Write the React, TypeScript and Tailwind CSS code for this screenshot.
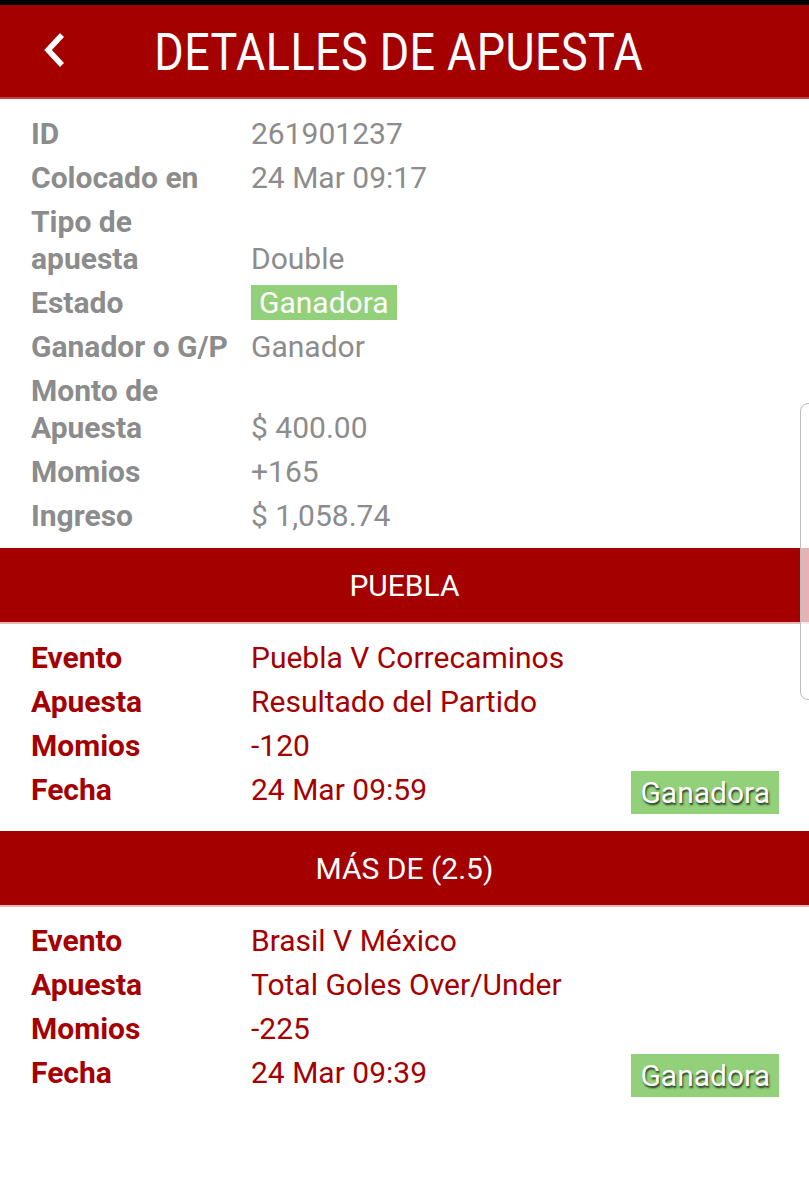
import React from "react";

const summary: { label: string; value: string; badge?: boolean }[] = [
  { label: "ID", value: "261901237" },
  { label: "Colocado en", value: "24 Mar 09:17" },
  { label: "Tipo de apuesta", value: "Double" },
  { label: "Estado", value: "Ganadora", badge: true },
  { label: "Ganador o G/P", value: "Ganador" },
  { label: "Monto de Apuesta", value: "$ 400.00" },
  { label: "Momios", value: "+165" },
  { label: "Ingreso", value: "$ 1,058.74" },
];

const selections = [
  {
    title: "PUEBLA",
    rows: [
      { label: "Evento", value: "Puebla V Correcaminos" },
      { label: "Apuesta", value: "Resultado del Partido" },
      { label: "Momios", value: "-120" },
      { label: "Fecha", value: "24 Mar 09:59" },
    ],
  },
  {
    title: "MÁS DE (2.5)",
    rows: [
      { label: "Evento", value: "Brasil V México" },
      { label: "Apuesta", value: "Total Goles Over/Under" },
      { label: "Momios", value: "-225" },
      { label: "Fecha", value: "24 Mar 09:39" },
    ],
  },
];

function SectionBand({ title }: { title: string }) {
  return (
    <div className="border-b-2 border-[#e8b4b4]">
      <div className="flex h-[74px] items-center justify-center bg-[#a50000] text-[30px] text-white">
        {title}
      </div>
    </div>
  );
}

export default function App() {
  return (
    <div className="relative min-h-[1200px] bg-white font-['Roboto',sans-serif]">
      <div className="h-[5px] bg-black" />

      {/* header */}
      <div className="relative flex h-[94px] items-center justify-center border-b-2 border-[#c54040] bg-[#a50000]">
        <svg
          className="absolute left-[40px] top-[25px]"
          width="28"
          height="40"
          viewBox="0 0 28 40"
          fill="none"
        >
          <path d="M22 5 L8 20 L22 35" stroke="white" strokeWidth="5.5" strokeLinejoin="miter" />
        </svg>
        <h1 className="ml-[-12px] mt-[5px] inline-block scale-x-[0.88] text-[51px] font-normal tracking-[0.5px] text-white">
          DETALLES DE APUESTA
        </h1>
      </div>

      {/* bet summary */}
      <div className="flex flex-col gap-[7px] px-[31px] pt-[16px] pb-[14px] text-[30px] leading-[37px] text-[#8c8c8c]">
        {summary.map((r) => (
          <div key={r.label} className="flex items-end">
            <div className="w-[215px] shrink-0 font-bold">{r.label}</div>
            <div className="ml-[5px]">
              {r.badge ? (
                <span className="inline-block bg-[#92d07a] px-[8px] leading-[35px] text-white">{r.value}</span>
              ) : (
                <span>{r.value}</span>
              )}
            </div>
          </div>
        ))}
      </div>

      {selections.map((s) => (
        <div key={s.title}>
          <SectionBand title={s.title} />
          <div className="flex flex-col gap-[7px] pl-[31px] pr-[30px] pt-[15px] pb-[23px] text-[30px] leading-[37px] text-[#a50000]">
            {s.rows.map((r) => (
              <div key={r.label} className="flex items-start">
                <div className="w-[220px] shrink-0 font-bold">{r.label}</div>
                <span className="flex-1">{r.value}</span>
                {r.label === "Fecha" && (
                  <span className="mb-[-6px] bg-[#92d07a] px-[9px] leading-[43px] text-white [text-shadow:1px_2px_2px_rgba(0,0,0,0.75)]">
                    Ganadora
                  </span>
                )}
              </div>
            ))}
          </div>
        </div>
      ))}

      {/* edge panel handle */}
      <div className="absolute left-[800px] top-[403px] h-[297px] w-[20px] rounded-l-[8px] border border-[#bdbdbd] bg-white/70" />
    </div>
  );
}
